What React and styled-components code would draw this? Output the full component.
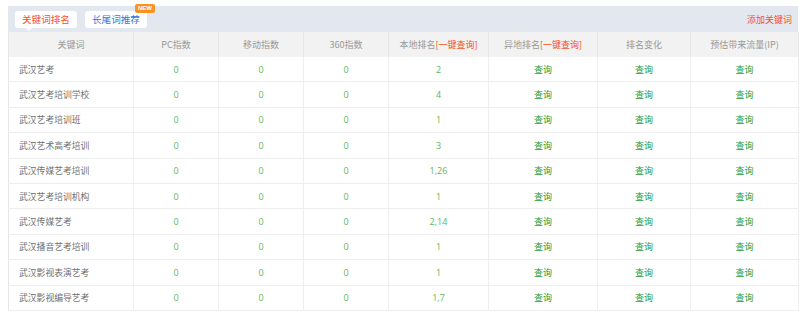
import React from "react";
import styled, { createGlobalStyle } from "styled-components";

const Global = createGlobalStyle`
	body {
		margin: 0;
		background: #fff;
		font-family: "Noto Sans CJK SC", "Noto Sans", sans-serif;
	}
`;

const Page = styled.div`
	padding: 6px 2px 0 8px;
	width: 790px;
`;

const TopBar = styled.div`
	height: 26px;
	background: #e3e7f0;
	display: flex;
	align-items: center;
	padding: 0 6px 0 7px;
	gap: 8px;
`;

const Tab = styled.div`
	position: relative;
	height: 17px;
	padding: 0 7px;
	background: #fff;
	border-radius: 3px;
	font-size: 9.6px;
	line-height: 17px;
	color: ${(p) => (p.$active ? "#f4511e" : "#2f7bd9")};
	margin-top: 1px;
`;

const Pointer = styled.span`
	position: absolute;
	left: 11px;
	bottom: -3px;
	width: 0;
	height: 0;
	border-left: 3px solid transparent;
	border-right: 3px solid transparent;
	border-top: 3px solid #fff;
`;

const Badge = styled.span`
	position: absolute;
	right: -8px;
	top: -7px;
	height: 9px;
	padding: 0 3px;
	background: #f7931e;
	border-radius: 2px;
	color: #fff;
	font-family: "Liberation Sans", sans-serif;
	font-size: 6px;
	line-height: 9px;
	font-weight: bold;
`;

const AddLink = styled.a`
	margin-left: auto;
	font-size: 9px;
	color: #f4511e;
	text-decoration: none;
`;

const Table = styled.table`
	width: 790px;
	border-collapse: collapse;
	table-layout: fixed;
	border-left: 1px solid #e6e6e6;
`;

const Head = styled.th`
	height: 25px;
	padding: 0;
	background: #f2f2f2;
	border-right: 1px solid #e6e6e6;
	font-size: 9px;
	font-weight: normal;
	color: #999;
	text-align: center;
`;

const Hot = styled.span`
	color: #f4511e;
`;

const Cell = styled.td`
	height: 24.4px;
	padding: 0 0 0 ${(p) => (p.$left ? "10px" : "0")};
	border-right: 1px solid #eeeeee;
	border-bottom: 1px solid #eeeeee;
	font-size: ${(p) => (p.$left ? "8.8px" : "9px")};
	text-align: ${(p) => (p.$left ? "left" : "center")};
	color: ${(p) =>
		p.$tone === "num" ? "#5cb85c" : p.$tone === "link" ? "#259b36" : "#707070"};
	font-family: ${(p) =>
		p.$tone === "num"
			? "\"Open Sans\", \"Noto Sans\", sans-serif"
			: "\"Noto Sans CJK SC\", sans-serif"};
`;

const widths = [125, 85, 85, 85, 100, 109, 93, 108];

const rows = [
	["武汉艺考", "2"],
	["武汉艺考培训学校", "4"],
	["武汉艺考培训班", "1"],
	["武汉艺术高考培训", "3"],
	["武汉传媒艺考培训", "1,26"],
	["武汉艺考培训机构", "1"],
	["武汉传媒艺考", "2,14"],
	["武汉播音艺考培训", "1"],
	["武汉影视表演艺考", "1"],
	["武汉影视编导艺考", "1,7"],
];

export default function App() {
	return (
		<Page>
			<Global />
			<TopBar>
				<Tab $active>
					关键词排名
					<Pointer />
				</Tab>
				<Tab>
					长尾词推荐
					<Badge>NEW</Badge>
				</Tab>
				<AddLink href="#">添加关键词</AddLink>
			</TopBar>
			<Table>
				<colgroup>
					{widths.map((w, i) => (
						<col key={i} style={{ width: w }} />
					))}
				</colgroup>
				<thead>
					<tr>
						<Head>关键词</Head>
						<Head>PC指数</Head>
						<Head>移动指数</Head>
						<Head>360指数</Head>
						<Head>
							本地排名<Hot>[一键查询]</Hot>
						</Head>
						<Head>
							异地排名<Hot>[一键查询]</Hot>
						</Head>
						<Head>排名变化</Head>
						<Head>预估带来流量(IP)</Head>
					</tr>
				</thead>
				<tbody>
					{rows.map(([word, rank]) => (
						<tr key={word}>
							<Cell $left>{word}</Cell>
							<Cell $tone="num">0</Cell>
							<Cell $tone="num">0</Cell>
							<Cell $tone="num">0</Cell>
							<Cell $tone="num">{rank}</Cell>
							<Cell $tone="link">查询</Cell>
							<Cell $tone="link">查询</Cell>
							<Cell $tone="link">查询</Cell>
						</tr>
					))}
				</tbody>
			</Table>
		</Page>
	);
}
